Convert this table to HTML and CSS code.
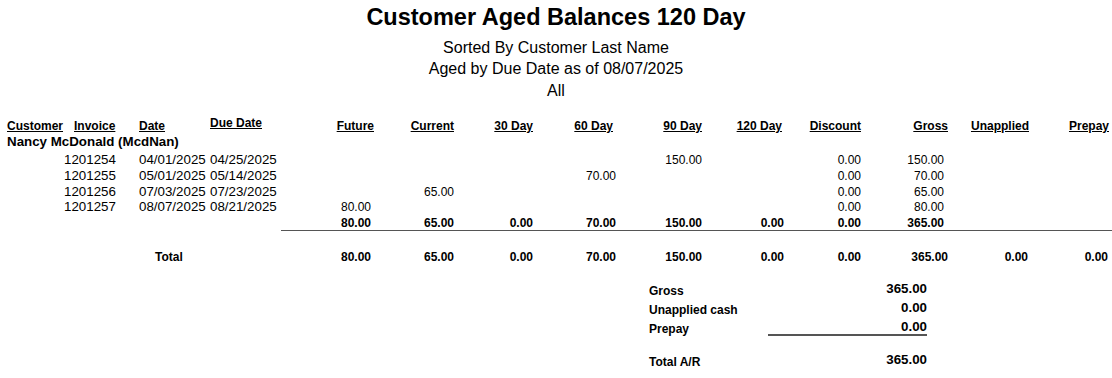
FILE: index.html
```html
<!DOCTYPE html>
<html lang="en">
<head>
<meta charset="utf-8">
<title>Customer Aged Balances 120 Day</title>
<link rel="stylesheet" href="styles.css">
</head>
<body>
<div class="report">
  <header class="report-head">
    <h1 class="title">Customer Aged Balances 120 Day</h1>
    <div class="subs">
      <div class="sub">Sorted By Customer Last Name</div>
      <div class="sub">Aged by Due Date as of 08/07/2025</div>
      <div class="sub">All</div>
    </div>
  </header>

  <div class="grid col-heads">
    <span class="h c1 h-cust">Customer</span>
    <span class="h c2 h-inv">Invoice</span>
    <span class="h c3">Date</span>
    <span class="h c4 h-due">Due Date</span>
    <span class="h num c5">Future</span>
    <span class="h num c6">Current</span>
    <span class="h num c7">30 Day</span>
    <span class="h num c8 pr3">60 Day</span>
    <span class="h num c9">90 Day</span>
    <span class="h num c10 pr2">120 Day</span>
    <span class="h num c11">Discount</span>
    <span class="h num c12">Gross</span>
    <span class="h num c13">Unapplied</span>
    <span class="h num c14">Prepay</span>
  </div>

  <div class="customer">Nancy McDonald (McdNan)</div>

  <div class="lines">
    <div class="grid line">
      <span class="txt c2">1201254</span>
      <span class="txt c3">04/01/2025</span>
      <span class="txt c4">04/25/2025</span>
      <span class="val c9">150.00</span>
      <span class="val c11">0.00</span>
      <span class="val c12 pr4">150.00</span>
    </div>
    <div class="grid line">
      <span class="txt c2">1201255</span>
      <span class="txt c3">05/01/2025</span>
      <span class="txt c4">05/14/2025</span>
      <span class="val c8">70.00</span>
      <span class="val c11">0.00</span>
      <span class="val c12 pr4">70.00</span>
    </div>
    <div class="grid line">
      <span class="txt c2">1201256</span>
      <span class="txt c3">07/03/2025</span>
      <span class="txt c4">07/23/2025</span>
      <span class="val c6">65.00</span>
      <span class="val c11">0.00</span>
      <span class="val c12 pr4">65.00</span>
    </div>
    <div class="grid line">
      <span class="txt c2">1201257</span>
      <span class="txt c3">08/07/2025</span>
      <span class="txt c4">08/21/2025</span>
      <span class="val c5 pr3">80.00</span>
      <span class="val c11">0.00</span>
      <span class="val c12 pr4">80.00</span>
    </div>
  </div>

  <div class="grid subtotal">
    <span class="bval c5 pr3">80.00</span>
    <span class="bval c6">65.00</span>
    <span class="bval c7">0.00</span>
    <span class="bval c8">70.00</span>
    <span class="bval c9">150.00</span>
    <span class="bval c10">0.00</span>
    <span class="bval c11">0.00</span>
    <span class="bval c12 pr4">365.00</span>
  </div>
  <div class="subtotal-rule"></div>

  <div class="grid grand">
    <span class="blabel c3 total-label">Total</span>
    <span class="bval c5 pr3">80.00</span>
    <span class="bval c6">65.00</span>
    <span class="bval c7">0.00</span>
    <span class="bval c8">70.00</span>
    <span class="bval c9">150.00</span>
    <span class="bval c10">0.00</span>
    <span class="bval c11">0.00</span>
    <span class="bval c12">365.00</span>
    <span class="bval c13 pr1">0.00</span>
    <span class="bval c14 pr1">0.00</span>
  </div>

  <div class="summary">
    <div class="srow">
      <span class="slabel">Gross</span>
      <span class="sval">365.00</span>
    </div>
    <div class="srow">
      <span class="slabel">Unapplied cash</span>
      <span class="sval">0.00</span>
    </div>
    <div class="srow">
      <span class="slabel">Prepay</span>
      <span class="sval ruled">0.00</span>
    </div>
    <div class="srow srow-total">
      <span class="slabel">Total A/R</span>
      <span class="sval">365.00</span>
    </div>
  </div>
</div>
</body>
</html>
```

FILE: styles.css
```css
* { box-sizing: border-box; }

html, body {
  margin: 0;
  padding: 0;
  background: #ffffff;
}

body {
  font-family: "Liberation Sans", Arial, sans-serif;
  color: #000000;
}

.report {
  width: 1112px;
}

/* ---------- heading ---------- */
.report-head {
  text-align: center;
  padding-top: 4px;
}

.title {
  margin: 0;
  font-size: 23.5px;
  line-height: 27px;
  font-weight: bold;
}

.subs {
  margin-top: 5.5px;
}

.sub {
  font-size: 16px;
  line-height: 21.7px;
}

/* ---------- column grid ---------- */
.grid {
  display: grid;
  grid-template-columns: 64px 75px 71px 71px 93px 80px 79px 83px 86px 82px 77px 87px 81px 80px;
  white-space: nowrap;
}

.c1 { grid-column: 1; }
.c2 { grid-column: 2; }
.c3 { grid-column: 3; }
.c4 { grid-column: 4; }
.c5 { grid-column: 5; }
.c6 { grid-column: 6; }
.c7 { grid-column: 7; }
.c8 { grid-column: 8; }
.c9 { grid-column: 9; }
.c10 { grid-column: 10; }
.c11 { grid-column: 11; }
.c12 { grid-column: 12; }
.c13 { grid-column: 13; }
.c14 { grid-column: 14; }

.pr1 { padding-right: 1px; }
.pr2 { padding-right: 2px; }
.pr3 { padding-right: 3px; }
.pr4 { padding-right: 4px; }

/* column headings */
.col-heads {
  margin-top: 14.2px;
  align-items: end;
}

.h {
  font-size: 12px;
  line-height: 14px;
  font-weight: bold;
  text-decoration: underline;
}

.num { text-align: right; }

.h-cust { padding-left: 7px; }
.h-inv { padding-left: 10px; }
.h-due { padding-bottom: 3px; }

/* customer name */
.customer {
  margin-top: 1.6px;
  padding-left: 7px;
  font-size: 13.33px;
  line-height: 16px;
  font-weight: bold;
}

/* detail lines */
.lines {
  padding-top: 2.1px;
}

.line {
  align-items: baseline;
  height: 15.67px;
}

.txt {
  font-size: 13.33px;
  line-height: 15.67px;
}

.val {
  font-size: 12px;
  line-height: 15.67px;
  text-align: right;
}

/* subtotal */
.subtotal {
  margin-top: 1.3px;
}

.bval, .blabel {
  font-size: 12px;
  line-height: 14px;
  font-weight: bold;
}

.bval { text-align: right; }

.subtotal-rule {
  margin-left: 281px;
  height: 1px;
  background: #555555;
}

/* grand total */
.grand {
  margin-top: 19px;
}

.total-label {
  padding-left: 16px;
}

/* summary */
.summary {
  margin-top: 18px;
  margin-left: 649px;
  width: 278px;
}

.srow {
  display: flex;
  justify-content: space-between;
  align-items: flex-start;
}

.slabel {
  font-size: 12px;
  line-height: 18.6px;
  font-weight: bold;
}

.sval {
  font-size: 13.33px;
  line-height: 14px;
  font-weight: bold;
  text-align: right;
}

.ruled {
  width: 159px;
  border-bottom: 2px solid #555555;
}

.srow-total {
  margin-top: 15px;
}
```
